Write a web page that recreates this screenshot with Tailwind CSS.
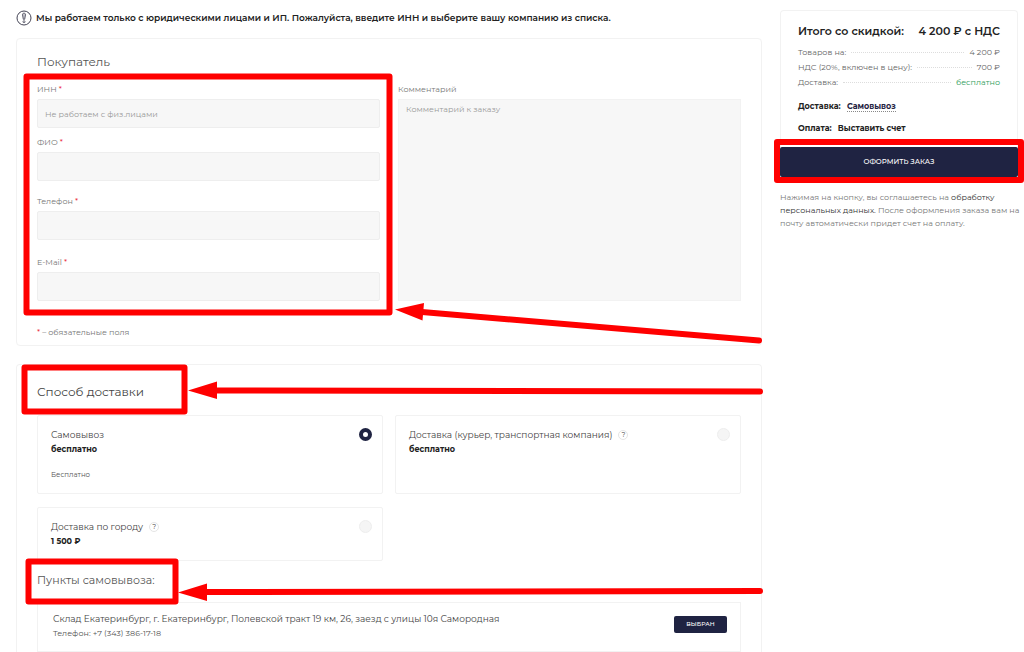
<!DOCTYPE html>
<html lang="ru">
<head>
  <meta charset="UTF-8" />
  <meta name="viewport" content="width=device-width, initial-scale=1.0" />
  <title>Оформление заказа</title>
  <script src="https://cdn.jsdelivr.net/npm/@tailwindcss/browser@4"></script>
  <style>
    body {
      font-family: Montserrat, Inter, 'Liberation Sans', sans-serif;
    }
  </style>
</head>
<body class="bg-white text-[#333] overflow-x-hidden">
  <div class="relative flex min-h-screen items-stretch gap-[18px] pl-4 pr-[6px] pt-[10px]">

    <main class="flex flex-1 flex-col">
      <!-- Предупреждение -->
      <div class="mb-3 flex h-4 items-center gap-1">
        <svg class="size-4" viewBox="0 0 16 16" fill="none" stroke="#444455">
          <circle cx="8" cy="8" r="7" />
          <path d="M8 3.2c-1.1 0-1.7.7-1.5 1.8L7.300 9.300h1.400L9.500 5C9.700 3.900 9.100 3.200 8 3.200z" fill="#c4c4cc" stroke-width=".8" />
          <circle cx="8" cy="11.700" r="1" stroke-width=".8" />
        </svg>
        <p class="text-[9px] font-semibold leading-4 whitespace-nowrap text-[#222]">Мы работаем только с юридическими лицами и ИП. Пожалуйста, введите ИНН и выберите вашу компанию из списка.</p>
      </div>

      <!-- Покупатель -->
      <section class="rounded-sm border border-[#f2f2f2] px-5 pt-[15px] pb-[7px]">
        <h2 class="text-xs leading-4 text-[#555]">Покупатель</h2>
        <div class="mt-[13px] grid grid-cols-2 gap-[18px] text-[8px]">
          <div>
            <label for="inn" class="block leading-3 text-[#777]">ИНН <span class="text-red-600">*</span></label>
            <input id="inn" type="text" placeholder="Не работаем с физ.лицами" class="mt-1 block h-[29px] w-full rounded-xs border border-[#eee] bg-[#f7f7f7] px-[7px] placeholder:text-[#999]">
            <label for="fio" class="mt-2 block leading-3 text-[#777]">ФИО <span class="text-red-600">*</span></label>
            <input id="fio" type="text" class="mt-1 block h-[29px] w-full rounded-xs border border-[#eee] bg-[#f7f7f7] px-[7px]">
            <label for="phone" class="mt-[14px] block leading-3 text-[#777]">Телефон <span class="text-red-600">*</span></label>
            <input id="phone" type="tel" class="mt-1 block h-[29px] w-full rounded-xs border border-[#eee] bg-[#f7f7f7] px-[7px]">
            <label for="email" class="mt-4 block leading-3 text-[#777]">E-Mail <span class="text-red-600">*</span></label>
            <input id="email" type="email" class="mt-1 block h-[29px] w-full rounded-xs border border-[#eee] bg-[#f7f7f7] px-[7px]">
          </div>
          <div class="flex flex-col">
            <label for="comment" class="block leading-3 text-[#777]">Комментарий</label>
            <textarea id="comment" placeholder="Комментарий к заказу" class="mt-1 block w-full flex-1 resize-none border border-[#f2f2f2] bg-[#f7f7f7] px-[7px] py-[3px] leading-3 placeholder:text-[#999]"></textarea>
          </div>
        </div>
        <p class="mt-[25px] text-[8px] leading-3 text-[#777]"><span class="text-red-600">*</span> – обязательные поля</p>
      </section>

      <!-- Способ доставки -->
      <section class="mt-[18px] flex-1 rounded-t-sm border border-b-0 border-[#f2f2f2] px-5 pt-[19px]">
        <h2 class="text-xs leading-4 text-[#444]">Способ доставки</h2>
        <div class="mt-[15px] grid grid-cols-2 gap-x-3 gap-y-[13px] text-[9px] leading-[14px]">
          <label class="flex h-[79px] items-start justify-between rounded-xs border border-[#f2f2f2] pt-3 pr-[10px] pl-[13px]">
            <span>
              <span class="block text-[#444]">Самовывоз</span>
              <b class="block text-[8px] text-[#222]">бесплатно</b>
              <span class="mt-3 block text-[7px] text-[#555]">Бесплатно</span>
            </span>
            <input type="radio" name="delivery" checked class="size-[13px] appearance-none rounded-full border border-[#eee] bg-[#f5f5f5] checked:border-4 checked:border-[#1f2342] checked:bg-white">
          </label>
          <label class="flex h-[79px] items-start justify-between rounded-xs border border-[#f2f2f2] pt-3 pr-[10px] pl-[13px]">
            <span>
              <span class="flex items-center gap-[6px] text-[#444]">Доставка (курьер, транспортная компания)
                <span class="size-[10px] rounded-full border border-[#e5e5e5] text-center text-[7px] leading-2">?</span>
              </span>
              <b class="block text-[8px] text-[#222]">бесплатно</b>
            </span>
            <input type="radio" name="delivery" class="size-[13px] appearance-none rounded-full border border-[#eee] bg-[#f5f5f5] checked:border-4 checked:border-[#1f2342] checked:bg-white">
          </label>
          <label class="flex h-[54px] items-start justify-between rounded-xs border border-[#f2f2f2] pt-3 pr-[10px] pl-[13px]">
            <span>
              <span class="flex items-center gap-[6px] text-[#444]">Доставка по городу
                <span class="size-[10px] rounded-full border border-[#e5e5e5] text-center text-[7px] leading-2">?</span>
              </span>
              <b class="block text-[8px] text-[#222]">1 500 ₽</b>
            </span>
            <input type="radio" name="delivery" class="size-[13px] appearance-none rounded-full border border-[#eee] bg-[#f5f5f5] checked:border-4 checked:border-[#1f2342] checked:bg-white">
          </label>
        </div>

        <h3 class="mt-[11px] text-[11px] leading-4 text-[#555]">Пункты самовывоза:</h3>
        <div class="mt-[14px] flex h-[50px] items-start justify-between border border-[#f2f2f2] pt-[9px] pr-[13px] pl-[15px]">
          <div>
            <p class="text-[9px] leading-[14px] text-[#444]">Склад Екатеринбург, г. Екатеринбург, Полевской тракт 19 км, 26, заезд с улицы 10я Самородная</p>
            <p class="text-[8px] leading-[14px] text-[#555]">Телефон: +7 (343) 386-17-18</p>
          </div>
          <button class="mt-1 h-[17px] w-[53px] rounded-xs bg-[#1f2342] text-[6px] font-medium text-white">ВЫБРАН</button>
        </div>
      </section>
    </main>

    <!-- Итого -->
    <aside class="w-[238px]">
      <div class="rounded-t-sm border border-b-0 border-[#f2f2f2] px-[17px] pt-3">
        <div class="flex justify-between text-[11px] leading-4 font-semibold whitespace-nowrap text-[#222]">
          <span>Итого со скидкой:</span>
          <span>4 200 ₽ с НДС</span>
        </div>
        <dl class="mt-[6px] text-[8px] leading-[15px] text-[#666]">
          <div class="flex items-center gap-[5px]"><dt>Товаров на:</dt><span class="flex-1 border-b border-dotted border-[#ddd]"></span><dd>4 200 ₽</dd></div>
          <div class="flex items-center gap-[5px]"><dt>НДС (20%, включен в цену):</dt><span class="flex-1 border-b border-dotted border-[#ddd]"></span><dd>700 ₽</dd></div>
          <div class="flex items-center gap-[5px]"><dt>Доставка:</dt><span class="flex-1 border-b border-dotted border-[#ddd]"></span><dd class="text-[#2f9e5c]">бесплатно</dd></div>
        </dl>
        <p class="mt-[10px] text-[8px] leading-3 font-bold text-[#222]">Доставка: <a href="#" class="ml-1 border-b border-dotted border-[#888] text-[#1f2342]">Самовывоз</a></p>
        <p class="mt-[10px] pb-[13px] text-[8px] leading-3 font-bold text-[#222]">Оплата: <span class="ml-1">Выставить счет</span></p>
      </div>
      <button class="block h-[30px] w-full rounded-xs bg-[#1f2342] text-[7px] font-medium text-white">ОФОРМИТЬ ЗАКАЗ</button>
      <p class="-mr-[6px] mt-[14px] text-[8px] leading-[13px] text-[#777]">Нажимая на кнопку, вы соглашаетесь на <a href="#" class="text-[#333]">обработку персональных данных.</a> После оформления заказа вам на почту автоматически придет счет на оплату.</p>
    </aside>

    <!-- Пометки поверх страницы -->
    <svg class="pointer-events-none absolute top-0 left-0" width="1024" height="652" fill="none" stroke="#ff0000" stroke-width="6" stroke-linejoin="round" stroke-linecap="round">
      <rect x="26.500" y="76.500" width="363" height="236" />
      <rect x="24.500" y="367.500" width="160" height="44" />
      <rect x="28.500" y="561.500" width="147" height="40" />
      <rect x="777" y="142" width="244" height="38" />
      <path d="M422 312L759 340.500M215 390.500L760 391.500M206 592L760 591" />
      <g fill="#ff0000" stroke="none">
        <path d="M395 309.500L424 303L422.500 320.500zM188 390.500L217 381.500V399zM178 592.500L207 583.500V601z" />
      </g>
    </svg>
  </div>
</body>
</html>
